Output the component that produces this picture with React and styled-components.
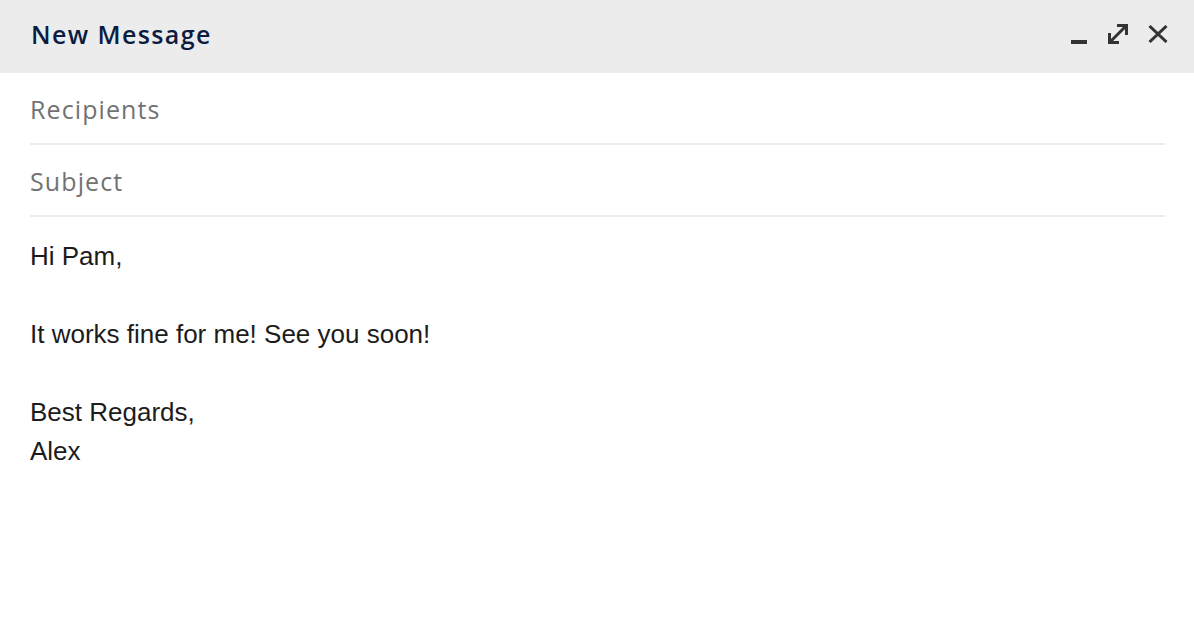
import React from 'react'
import styled, {createGlobalStyle} from 'styled-components'

const Global = createGlobalStyle`
body{
  margin:0;
  background:#fff;
}
`

const Window = styled.div`
width:1194px;
height:624px;
background:#fff;
display:flex;
flex-direction:column;
`
const Header = styled.div`
height:73px;
background:#ececec;
display:flex;
align-items:center;
justify-content:space-between;
padding:0 26px 6px 31px;
box-sizing:border-box;
`
const Title = styled.h1`
margin:0;
font-family:"Open Sans", Roboto, sans-serif;
font-weight:600;
font-size:25px;
color:#0b1c43;
letter-spacing:1.4px;
`
const Controls = styled.div`
display:flex;
align-items:center;
`
const IconButton = styled.button`
border:none;
background:none;
padding:0;
margin-left:${p => p.gap}px;
width:${p => p.size}px;
height:22px;
display:flex;
align-items:center;
justify-content:center;
cursor:pointer;
color:#333;
`
const Body = styled.div`
padding:0 29px 0 30px;
display:flex;
flex-direction:column;
`
const Field = styled.div`
height:72px;
display:flex;
align-items:center;
border-bottom:2px solid #ececec;
box-sizing:border-box;
font-family:"Open Sans", Roboto, sans-serif;
font-size:25px;
letter-spacing:1.1px;
color:#727272;
padding-top:1px;
`
const Message = styled.div`
padding-top:20px;
font-family:"Liberation Sans", Arial, sans-serif;
font-size:26px;
line-height:39px;
color:#1c1c1c;
`
const Line = styled.div`
min-height:39px;
`

const lines = ["Hi Pam,", "", "It works fine for me! See you soon!", "", "Best Regards,", "Alex"]

const App = () => {
  return (
    <Window>
      <Global />
      <Header>
        <Title>New Message</Title>
        <Controls>
          <IconButton aria-label="minimize" gap={0} size={16}>
            <svg width="16" height="22" viewBox="0 0 16 22"><rect x="0" y="17" width="16" height="4" fill="currentColor"/></svg>
          </IconButton>
          <IconButton aria-label="expand" gap={21} size={20}>
            <svg width="20" height="20" viewBox="0 0 20 20" fill="none" stroke="currentColor" strokeWidth="3">
              <path d="M3 17 L17 3"/>
              <path d="M9 1.5 H18.5 V11"/>
              <path d="M1.5 9 V18.5 H11"/>
            </svg>
          </IconButton>
          <IconButton aria-label="close" gap={20} size={20}>
            <svg width="20" height="18" viewBox="0 0 20 18" stroke="currentColor" strokeWidth="3">
              <path d="M1.5 1 L18.5 17 M18.5 1 L1.5 17"/>
            </svg>
          </IconButton>
        </Controls>
      </Header>
      <Body>
        <Field>Recipients</Field>
        <Field>Subject</Field>
        <Message>
          {lines.map((l, i) => <Line key={i}>{l}</Line>)}
        </Message>
      </Body>
    </Window>
  )
}

export default App
